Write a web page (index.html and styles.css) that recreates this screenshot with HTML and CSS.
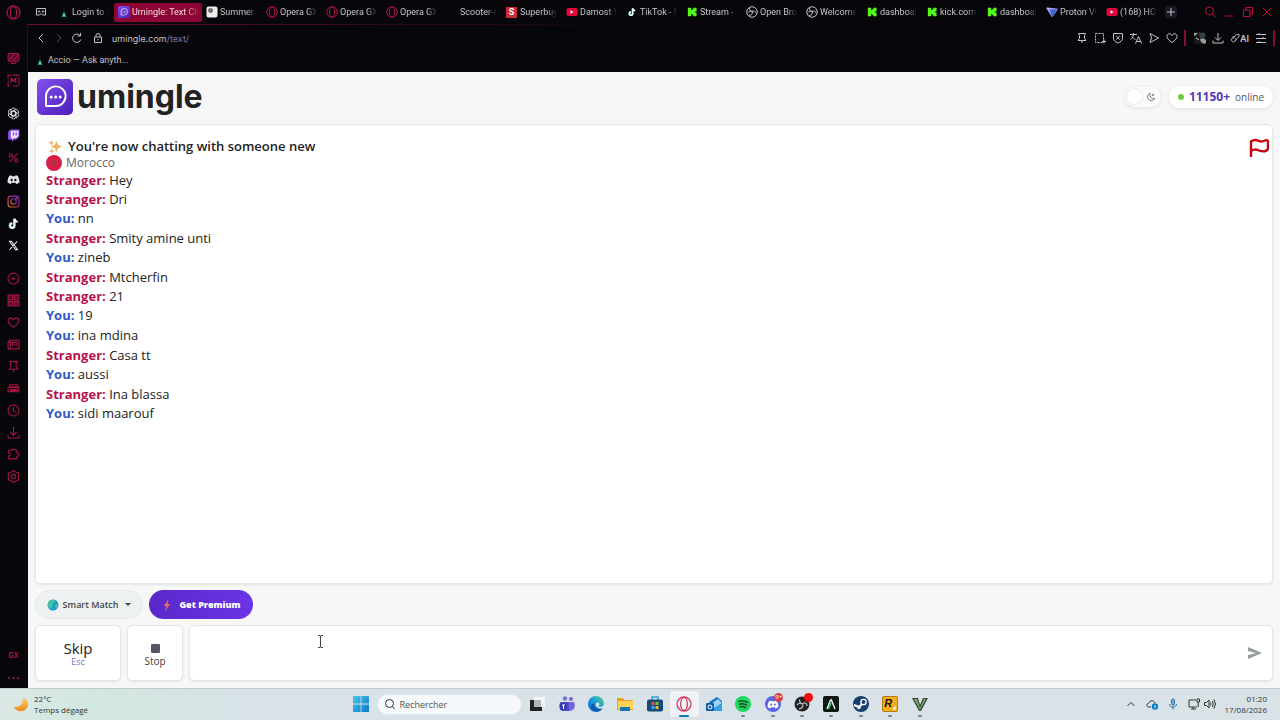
FILE: index.html
```
<!DOCTYPE html>
<html lang="en">
<head>
  <meta charset="UTF-8" />
  <meta name="viewport" content="width=device-width, initial-scale=1.0"/>
  <title>Umingle: Text Chat</title>
  <link rel="stylesheet" href="styles.css">
</head>
<body>
  <!-- shared icons -->
  <svg class="defs" aria-hidden="true">
    <defs>
      <linearGradient id="purple" x1="0" y1="0" x2="1" y2="1"><stop offset="0" stop-color="#8350ee"/><stop offset="1" stop-color="#4a1fb8"/></linearGradient>
      <linearGradient id="insta" x1="0" y1="1" x2="1" y2="0"><stop offset="0" stop-color="#d98a1e"/><stop offset=".5" stop-color="#b3246f"/><stop offset="1" stop-color="#6a35c9"/></linearGradient>
      <linearGradient id="proton" x1="0" y1="0" x2="1" y2="1"><stop offset="0" stop-color="#c9b8ff"/><stop offset="1" stop-color="#4d5fe8"/></linearGradient>
      <linearGradient id="win" x1="0" y1="0" x2="1" y2="1"><stop offset="0" stop-color="#4cc3ea"/><stop offset="1" stop-color="#0a7cc4"/></linearGradient>
      <linearGradient id="edge" x1="0" y1="1" x2="1" y2="0"><stop offset="0" stop-color="#0c62bd"/><stop offset=".55" stop-color="#1aa0dc"/><stop offset="1" stop-color="#56d66b"/></linearGradient>
      <linearGradient id="moon" x1="0" y1="0" x2="0" y2="1"><stop offset="0" stop-color="#ffd35c"/><stop offset="1" stop-color="#e98a1f"/></linearGradient>
    </defs>
    <symbol id="i-opera" viewBox="0 0 24 24"><circle cx="12" cy="12" r="10.5" fill="none" stroke="currentColor" stroke-width="2"/><ellipse cx="12" cy="12" rx="5" ry="9.5" fill="none" stroke="currentColor" stroke-width="2"/></symbol>
    <symbol id="i-umingle" viewBox="0 0 36 36"><rect width="36" height="36" rx="5" fill="url(#purple)"/><path d="M9 27V17.500a9.800 9.800 0 1 1 9.800 9.500z" fill="none" stroke="#fff" stroke-width="1.900" stroke-linejoin="round"/><g fill="#fff"><circle cx="14.200" cy="18" r="1.500"/><circle cx="18.700" cy="18" r="1.500"/><circle cx="23.200" cy="18" r="1.500"/></g></symbol>
    <symbol id="i-accio" viewBox="0 0 12 12"><path d="M6 5 8.500 11H3.500z" fill="#1d9a6b"/><circle cx="6" cy="9" r="1" fill="#7fe0b5"/></symbol>
    <symbol id="i-gpt" viewBox="0 0 24 24"><g fill="none" stroke="currentColor" stroke-width="1.500" stroke-linejoin="round"><path id="petal" d="M16.500 4.500A4.800 4.800 0 0 0 7.500 6v7.500l3.500 2M7.500 9.500 13.500 6"/><use href="#petal" transform="rotate(60 12 12)"/><use href="#petal" transform="rotate(120 12 12)"/><use href="#petal" transform="rotate(180 12 12)"/><use href="#petal" transform="rotate(240 12 12)"/><use href="#petal" transform="rotate(300 12 12)"/></g></symbol>
    <symbol id="i-youtube" viewBox="0 0 24 24"><rect x="1" y="4" width="22" height="16" rx="4" fill="#e3063c"/><path d="M9 8.500v7l6-3.500z" fill="#fff"/></symbol>
    <symbol id="i-tiktok" viewBox="0 0 24 24"><path d="M13 3v12.500a4 4 0 1 1-4-4" fill="none" stroke="#35d6d0" stroke-width="4"/><path d="M14 3v13a4 4 0 1 1-4-4M14 3c.5 3.500 2.500 5.500 6 6" fill="none" stroke="#fff" stroke-width="3.500"/></symbol>
    <symbol id="i-kick" viewBox="0 0 24 24"><path d="M2 2h8v5h3V4.500h2.500V2H23v8h-3v4h3v8h-7.500v-2.500H13V17h-3v5H2z" fill="#53fc18"/></symbol>
    <symbol id="i-obs" viewBox="0 0 24 24"><g fill="none" stroke="currentColor" stroke-width="2"><circle cx="12" cy="12" r="10.500"/><path d="M7 4c0 5 3 7 6.500 6.500M12 11c4.500-2.500 7.500 0 8 3M13 12c0 5-3 7.500-7 6.500M4 13c2-3 5-3.500 8-1"/></g></symbol>
    <symbol id="i-proton" viewBox="0 0 24 24"><path d="M2 3 22 5c2 .3 2 1.500 1 3L14 21c-1 1.500-2.500 1.500-3.200 0L1 5C.5 4 .8 3 2 3z" fill="url(#proton)"/><path d="M7 7h15l-9 14z" fill="#3f62c9"/></symbol>
    <symbol id="i-heart" viewBox="0 0 24 24"><path d="M12 21C5 16 2 12.500 2 8.500 2 3 9 1.500 12 7c3-5.500 10-4 10 1.500 0 4-3 7.500-10 12.500z" fill="none" stroke="currentColor" stroke-width="2" stroke-linejoin="round"/></symbol>
    <symbol id="i-pin" viewBox="0 0 24 24"><path d="M5 3h14l-2 4v6l3 4H4l3-4V7zM12 17v5" fill="none" stroke="currentColor" stroke-width="2" stroke-linejoin="round"/></symbol>
    <symbol id="i-download" viewBox="0 0 24 24"><path d="M12 2v14M6 11l6 6 6-6M2 17v5h20v-5" fill="none" stroke="currentColor" stroke-width="2"/></symbol>
    <symbol id="i-discord" viewBox="0 0 24 18"><path d="M8 1 4.500 2.200C2 6 .8 10 1 14.500 3 16.200 5 17 7 17.500l1.500-2.700h7L17 17.500c2-.5 4-1.300 6-3C23.200 10 22 6 19.500 2.200L16 1l-1 1.800H9z" fill="currentColor"/></symbol>
  </svg>

  <div class="desktop">
    <nav class="sidebar" aria-label="Opera sidebar">
      <button class="side opera-menu" aria-label="Opera menu"><svg><use href="#i-opera"/></svg></button>
      <div class="side-group">
        <button class="side" aria-label="Player"><svg viewBox="0 0 24 24"><rect x="2" y="3" width="20" height="14" rx="2" fill="#4a0c24" stroke="currentColor" stroke-width="2"/><path d="M4 14 14 4M10 16 21 6M7 21h10" stroke="currentColor" stroke-width="2"/></svg></button>
        <button class="side" aria-label="Mods"><svg viewBox="0 0 24 24" fill="none" stroke="currentColor" stroke-width="2"><path d="M8 2H2v20h6M11 2h11v20H11" stroke-dasharray="13 3"/><path d="M8 16V8l4 5 4-5v8" stroke-width="2.500"/></svg></button>
      </div>
      <div class="side-group">
        <button class="side light" aria-label="ChatGPT"><svg><use href="#i-gpt"/></svg></button>
        <button class="side" aria-label="Twitch"><svg viewBox="0 0 24 24"><path d="M6 1h17v13l-6 6h-4l-4 4v-4H2V5z" fill="#8b48ee"/><path d="M7 3h14v10l-4 4h-4l-3 3v-3H7z" fill="#efe5ff"/><path d="M12 6v6M17 6v6" stroke="#8b48ee" stroke-width="2.500"/></svg></button>
        <button class="side" aria-label="Deals"><svg viewBox="0 0 24 24" fill="none" stroke="currentColor" stroke-width="2"><circle cx="7" cy="8" r="3"/><circle cx="17" cy="17" r="3"/><path d="M19 5 5 20"/></svg></button>
        <button class="side light" aria-label="Discord"><svg viewBox="0 0 24 18"><use href="#i-discord"/><ellipse cx="8.500" cy="10" rx="2" ry="2.200" fill="#07070b"/><ellipse cx="15.500" cy="10" rx="2" ry="2.200" fill="#07070b"/></svg></button>
        <button class="side" aria-label="Instagram"><svg viewBox="0 0 24 24" fill="none" stroke="url(#insta)" stroke-width="2"><rect x="2" y="2" width="20" height="20" rx="5"/><circle cx="12" cy="12" r="5"/><circle cx="18" cy="6" r="1"/></svg></button>
        <button class="side" aria-label="TikTok"><svg><use href="#i-tiktok"/></svg></button>
        <button class="side light" aria-label="X"><svg class="small" viewBox="0 0 24 24" fill="none" stroke="currentColor" stroke-width="2.200"><path d="M3 3h4.500L21 21h-4.500zM20 3 3.500 21"/></svg></button>
      </div>
      <div class="side-group">
        <button class="side" aria-label="Media"><svg viewBox="0 0 24 24"><circle cx="12" cy="12" r="10" fill="none" stroke="currentColor" stroke-width="2"/><path d="M10 8.500v7l5-3.500z" fill="currentColor"/></svg></button>
        <button class="side" aria-label="Speed dial"><svg viewBox="0 0 24 24" fill="#50102a" stroke="currentColor" stroke-width="2"><path d="M2 2h9v9H2zM14 2h8v9h-8zM2 14h9v8H2zM14 14h8v8h-8z"/></svg></button>
        <button class="side" aria-label="Favourites"><svg><use href="#i-heart"/></svg></button>
        <button class="side" aria-label="News"><svg viewBox="0 0 24 24" fill="none" stroke="currentColor" stroke-width="2"><path d="M6 4h16v16H2V8h4zM6 8v12M10 8h8v5h-8zM2 8l4-4"/></svg></button>
        <button class="side" aria-label="Pinboards"><svg><use href="#i-pin"/></svg></button>
        <button class="side" aria-label="Workspaces"><svg viewBox="0 0 24 24" fill="none" stroke="currentColor" stroke-width="2"><path d="M5 5h15v4H5zM2 10h20v4H6M2 10v8h20v-4M6 16h12"/></svg></button>
        <button class="side" aria-label="History"><svg viewBox="0 0 24 24" fill="none" stroke="currentColor" stroke-width="2"><circle cx="12" cy="12" r="10"/><path d="M12 6v6l4 3"/></svg></button>
        <button class="side" aria-label="Downloads"><svg><use href="#i-download"/></svg></button>
        <button class="side" aria-label="Extensions"><svg viewBox="0 0 24 24" fill="none" stroke="currentColor" stroke-width="2" stroke-linejoin="round"><path d="M3 4h5c0 -2 7 -2 7 0h3v5c6 1 6 6 0 7v4H3v-5c4-1 4-5 0-6z"/></svg></button>
        <button class="side" aria-label="Settings"><svg viewBox="0 0 24 24" fill="none" stroke="currentColor" stroke-width="2" stroke-linejoin="round"><path d="m12 1 4 2.500 5.500 2V18L16 20.500 12 23l-4-2.500L2.500 18V5.500L8 3.500z"/><circle cx="12" cy="12" r="4"/></svg></button>
      </div>
      <div class="side-group side-bottom">
        <button class="side gx">GX</button>
        <button class="side" aria-label="More"><svg viewBox="0 0 24 24" fill="currentColor"><circle cx="4" cy="13" r="2"/><circle cx="12" cy="13" r="2"/><circle cx="20" cy="13" r="2"/></svg></button>
      </div>
    </nav>

    <div class="window">
      <header class="tabs">
        <button class="gamepad" aria-label="Tab islands"><svg viewBox="0 0 24 24" fill="none" stroke="currentColor" stroke-width="2"><path d="M3 5h18v13h-6l-3-3-3 3H3z"/><circle cx="8" cy="11" r="1.500"/><circle cx="16" cy="11" r="1.500"/></svg></button>
        <a class="tab" href="#"><svg><use href="#i-accio"/></svg><span>Login to A</span></a>
        <a class="tab active" href="#"><svg><use href="#i-umingle"/></svg><span>Umingle: Text Ch</span></a>
        <a class="tab" href="#"><svg viewBox="0 0 24 24"><rect x="1" y="1" width="22" height="22" rx="4" fill="#eee"/><svg x="3" y="3" width="18" height="18" color="#222"><use href="#i-gpt"/></svg></svg><span>Summer</span></a>
        <a class="tab" href="#"><svg class="red"><use href="#i-opera"/></svg><span>Opera GX</span></a>
        <a class="tab" href="#"><svg class="red"><use href="#i-opera"/></svg><span>Opera GX</span></a>
        <a class="tab" href="#"><svg class="red"><use href="#i-opera"/></svg><span>Opera GX</span></a>
        <a class="tab" href="#"><svg></svg><span>Scooter-A</span></a>
        <a class="tab" href="#"><b class="superbuy">S</b><span>Superbuy</span></a>
        <a class="tab" href="#"><svg><use href="#i-youtube"/></svg><span>Damost V</span></a>
        <a class="tab" href="#"><svg class="small"><use href="#i-tiktok"/></svg><span>TikTok - M</span></a>
        <a class="tab" href="#"><svg class="small"><use href="#i-kick"/></svg><span>Stream -</span></a>
        <a class="tab" href="#"><svg><use href="#i-obs"/></svg><span>Open Bro</span></a>
        <a class="tab" href="#"><svg><use href="#i-obs"/></svg><span>Welcome</span></a>
        <a class="tab" href="#"><svg class="small"><use href="#i-kick"/></svg><span>dashboar</span></a>
        <a class="tab" href="#"><svg class="small"><use href="#i-kick"/></svg><span>kick.com</span></a>
        <a class="tab" href="#"><svg class="small"><use href="#i-kick"/></svg><span>dashboar</span></a>
        <a class="tab" href="#"><svg><use href="#i-proton"/></svg><span>Proton VP</span></a>
        <a class="tab" href="#"><svg><use href="#i-youtube"/></svg><span>(168) HOV</span></a>
        <button class="new-tab" aria-label="New tab"><svg viewBox="0 0 12 12" stroke="currentColor"><path d="M6 2v8M2 6h8"/></svg></button>
        <div class="window-buttons">
          <button aria-label="Search tabs"><svg viewBox="0 0 12 12"><circle cx="5.500" cy="5" r="4"/><path d="m8.500 8 3 3"/></svg></button>
          <button aria-label="Minimize"><svg viewBox="0 0 12 12"><path d="M2 10h8"/></svg></button>
          <button aria-label="Restore"><svg viewBox="0 0 12 12"><path d="M1.500 4h6.500v6.500H1.500zM4 4V1.500h6.500V8H8"/></svg></button>
          <button aria-label="Close"><svg viewBox="0 0 12 12"><path d="m2 2 8 8M10 2l-8 8"/></svg></button>
        </div>
      </header>

      <div class="chrome">
        <div class="toolbar">
          <button aria-label="Back"><svg viewBox="0 0 12 12"><path d="M8 2 4 6l4 4"/></svg></button>
          <button class="dim" aria-label="Forward"><svg viewBox="0 0 12 12"><path d="m4 2 4 4-4 4"/></svg></button>
          <button aria-label="Reload"><svg viewBox="0 0 12 12"><path d="M9 3.500a4.200 4.200 0 1 0 .8 4M9.500 1v3H6.500"/></svg></button>
          <button class="lock" aria-label="Site information"><svg viewBox="0 0 12 12"><path d="M2.500 5h7v5.500h-7zM4 5V3.500a2 2 0 0 1 4 0V5M6 7v1.500"/></svg></button>
          <div class="url">umingle.com<span>/text/</span></div>
          <button aria-label="Pin"><svg><use href="#i-pin"/></svg></button>
          <button aria-label="Snapshot"><svg viewBox="0 0 12 12"><path d="M1.500 1.500h8v9h-8z" stroke-dasharray="2 1"/><path d="M8 9.500h4M10 7.500v4"/></svg></button>
          <button aria-label="Ad blocker"><svg viewBox="0 0 12 12"><path d="M1.500 1.500h9V6c0 2.500-2 4-4.500 5-2.500-1-4.500-2.500-4.500-5zM4.200 4l3.600 3.600M7.800 4 4.200 7.600"/></svg></button>
          <button aria-label="Translate"><svg viewBox="0 0 12 12"><path d="M0 2.500h7M3.500 1v1.500C3 5 2 6.500.5 7.500M2 4.500c1 1.500 2 2.300 3.500 3M5.500 11.500l3-7 3 7M6.500 9.500h4"/></svg></button>
          <button aria-label="My Flow"><svg viewBox="0 0 12 12"><path d="m2 1.500 8.500 4.500L2 10.500 3.500 6z"/></svg></button>
          <button aria-label="Bookmark"><svg><use href="#i-heart"/></svg></button>
          <i class="bar"></i>
          <button class="profile" aria-label="Profile"><svg viewBox="0 0 12 12"><rect width="12" height="12" rx="2" fill="#15191c" stroke="none"/><path d="M0 1h4L2 3 0 4zM6 7l3-1 3 2v3l-2 1-3-2z" fill="#a3978f" stroke="none"/><path d="M5 1h6v4L6 6z" fill="#36444a" stroke="none"/><path d="m2 6 3 2" stroke="#d6d0ca"/></svg></button>
          <button aria-label="Downloads"><svg><use href="#i-download"/></svg></button>
          <button class="ai"><svg viewBox="0 0 12 12"><path d="M1 8.500 7.500 2 11 1.500 10.500 5 4 11zM2 6l3-2M8 7l-2 3M4.500 5 7 7.500"/></svg>AI</button>
          <button aria-label="Easy setup"><svg viewBox="0 0 12 12"><path d="M1 2.500h10M1 6.500h10M1 10.500h10M4 1v2M8 5v2M4 9v2"/></svg></button>
          <i class="bar"></i>
        </div>
        <div class="bookmarks"><a href="#"><svg><use href="#i-accio"/></svg>Accio — Ask anyth...</a></div>
      </div>

      <main class="page">
        <div class="page-header">
          <a class="logo" href="#"><svg><use href="#i-umingle"/></svg>umingle</a>
          <label class="theme"><input type="checkbox" aria-label="Dark mode"><svg viewBox="0 0 12 12"><path d="M5 1.500a4.500 4.500 0 1 0 5.500 6C7 9 4 6 5 1.500zM8.500 2v3M7 3.500h3" fill="none" stroke="#666"/></svg></label>
          <div class="online"><i></i><b>11150+</b><span>online</span></div>
        </div>

        <section class="chat">
          <button class="flag" aria-label="Report"><svg viewBox="0 0 20 20"><path d="M2 19V3.500C5 1 7 1.500 10 3c2 1 4 .5 6-.5 2-.8 3 0 3 1.500v6c0 2-1 2.500-2.500 3-2.500.8-4.500.3-6.500-.5-3-1.500-5-1.500-8 .5" fill="none" stroke="#c5050c" stroke-width="2.400" stroke-linejoin="round"/></svg></button>
          <h1><svg viewBox="0 0 16 16"><path d="m9 2 1.500 4L15 8l-4.500 2L9 14 7.500 10 3 8l4.500-2z" fill="#eeb55f"/><path d="m3.500 1 .8 2.200 2.200.8-2.200.8L3.500 7l-.8-2.200L.5 4l2.200-.8zM4 10l.8 2 2.200.8-2.200.8L4 16l-.8-2.400L1 12.800l2.200-.8z" fill="#f0ad58"/></svg>You're now chatting with someone new</h1>
          <div class="country"><svg viewBox="0 0 16 16"><circle cx="8" cy="8" r="8" fill="#d81e45"/><path d="m8 5.500 1.500 4.500-3.800-2.800h4.600L6.500 10z" fill="none" stroke="#8b403d"/></svg>Morocco</div>
          <ul class="messages">
            <li class="stranger"><b>Stranger:</b> Hey</li>
            <li class="stranger"><b>Stranger:</b> Dri</li>
            <li class="you"><b>You:</b> nn</li>
            <li class="stranger"><b>Stranger:</b> Smity amine unti</li>
            <li class="you"><b>You:</b> zineb</li>
            <li class="stranger"><b>Stranger:</b> Mtcherfin</li>
            <li class="stranger"><b>Stranger:</b> 21</li>
            <li class="you"><b>You:</b> 19</li>
            <li class="you"><b>You:</b> ina mdina</li>
            <li class="stranger"><b>Stranger:</b> Casa tt</li>
            <li class="you"><b>You:</b> aussi</li>
            <li class="stranger"><b>Stranger:</b> Ina blassa</li>
            <li class="you"><b>You:</b> sidi maarouf</li>
          </ul>
        </section>

        <div class="options">
          <button class="match"><svg viewBox="0 0 12 12"><circle cx="6" cy="6" r="5.500" fill="#2296d8"/><path d="M2 2.500C4 0 7 .5 8 1.500L7 4 5 5l1 2-2 3C1 9 0 6 2 2.500zM9 5l2 1-1 3-2-1z" fill="#43c59a"/></svg>Smart Match<i class="caret"></i></button>
          <button class="premium"><svg viewBox="0 0 12 12"><path d="M7.500 0 3 7h2.500L4 12l5-7H6.500z" fill="#f27455"/></svg>Get Premium</button>
        </div>

        <form class="composer">
          <button type="button" class="skip">Skip<small>Esc</small></button>
          <button type="button" class="stop"><i></i>Stop</button>
          <div class="message-box">
            <textarea aria-label="Message"></textarea>
            <button type="button" class="send" aria-label="Send"><svg viewBox="0 0 14 12"><path d="m0 0 14 6-14 6V8l8-2-8-2z" fill="#959e9e"/></svg></button>
            <svg class="cursor" viewBox="0 0 7 13"><path d="M1 .5h2l.5.5.5-.5h2M1 12.500h2l.5-.5.5.5h2M3.500 1v11" fill="none" stroke="#444"/></svg>
          </div>
        </form>
      </main>
    </div>
  </div>

  <footer class="taskbar">
    <div class="weather">
      <svg viewBox="0 0 16 16"><path d="M10 1c6 3 7 10 1 13.500C7 16.500 2 14.500 1 10.500c5 1.500 10-3 9-9.500z" fill="url(#moon)"/></svg>
      <div><b>22°C</b>Temps dégagé</div>
    </div>
    <div class="task-center">
      <button class="task start" aria-label="Start"><svg viewBox="0 0 16 16"><path d="M0 0h7.600v7.600H0zM8.400 0H16v7.600H8.400zM0 8.400h7.600V16H0zM8.400 8.400H16V16H8.400z" fill="url(#win)"/></svg></button>
      <label class="search"><svg viewBox="0 0 12 12"><circle cx="6.500" cy="5.500" r="4"/><path d="m9.500 8.500 2 2.500"/></svg><input type="search" placeholder="Rechercher" aria-label="Rechercher"></label>
      <div class="apps">
        <button class="task" aria-label="Task view"><svg viewBox="0 0 16 16"><path d="M5 1h11v10H5z" fill="#f5f6f6"/><path d="M1 4h4v7h8v4H1z" fill="#222"/><path d="M5 4h7v7H5z" fill="#b4b4b4"/></svg></button>
        <button class="task" aria-label="Teams"><svg viewBox="0 0 16 16"><circle cx="6" cy="2.500" r="2.200" fill="#7478e0"/><circle cx="12" cy="3" r="2" fill="#8b5fd4"/><path d="M2 6h8v9H4c-5 0-4-9-2-9z" fill="#4b50c8"/><path d="M10 6h5c2 5 0 9-5 9z" fill="#7a60df"/><rect x="1" y="7" width="7" height="7" rx="1" fill="#373bab"/><path d="M3 9h3M4.500 9v4" stroke="#fff"/></svg></button>
        <button class="task" aria-label="Edge"><svg viewBox="0 0 16 16"><circle cx="8" cy="8" r="8" fill="url(#edge)"/><path d="M6 8c0 4 4 6 8.500 4.500C12 16 6 16.500 3.500 13 2 10 4 7 6 8z" fill="#1358a8"/><path d="M8 7c3-2 5 2 2 3 2 1.500 5 1 6-1v3l-2 .5c-4 0-7-2-6-5.500z" fill="#dfe8ed"/></svg></button>
        <button class="task" aria-label="Explorer"><svg viewBox="0 0 16 16"><path d="M0 2h6l1.500 2H16v10H0z" fill="#e9a420"/><path d="M1 5h15v8H1z" fill="#ffd257"/><path d="M3 11h10v4H3z" fill="#1474b8"/></svg></button>
        <button class="task" aria-label="Store"><svg viewBox="0 0 16 16"><path d="M5 4V1h6v3" fill="none" stroke="#319ed4" stroke-width="1.500"/><rect x="0" y="3.500" width="16" height="12" rx="2" fill="#164a79"/><path d="M4.500 6h3v3h-3z" fill="#f05030"/><path d="M8.500 6h3v3h-3z" fill="#80ba28"/><path d="M4.500 10h3v3h-3z" fill="#35a5ed"/><path d="M8.500 10h3v3h-3z" fill="#f5bb24"/></svg></button>
        <button class="task current" aria-label="Opera GX"><svg class="pink"><use href="#i-opera"/></svg></button>
        <button class="task" aria-label="Outlook"><svg viewBox="0 0 16 16"><path d="M3 6 11 1l5 4v9H4z" fill="#1672c6"/><path d="m5 8 7-5 4 4-7 5z" fill="#9bd4f5"/><path d="m4 15 12-8v8z" fill="#31a4e8"/><rect y="7" width="8" height="8" rx="1" fill="#115ea5"/><circle cx="4" cy="11" r="2" fill="none" stroke="#fff"/></svg></button>
        <button class="task running" aria-label="Spotify"><svg viewBox="0 0 16 16"><circle cx="8" cy="8" r="8" fill="#1ed760"/><path d="M3.500 5.500c3-1 6.500-.7 9.500 1M4 8.300c2.500-.8 5.500-.5 8 1M4.500 11c2-.6 4.500-.3 6.500.8" fill="none" stroke="#153d24" stroke-width="1.400"/></svg></button>
        <button class="task running" aria-label="Discord"><svg viewBox="0 0 16 16"><circle cx="8" cy="8" r="8" fill="#5865e8"/><path d="m6 4.500-2 .7C3 7 2.500 9 2.700 11.200c1 .7 2 1 2.800 1.200l.8-1.200h3.400l.8 1.200c.8-.2 1.800-.5 2.800-1.200.2-2.200-.3-4.200-1.300-6l-2-.7-.5.800H6.500z" fill="#fff"/><circle cx="6.200" cy="8.500" r="1" fill="#5865e8"/><circle cx="9.800" cy="8.500" r="1" fill="#5865e8"/></svg><span class="badge">9+</span></button>
        <button class="task running" aria-label="OBS"><svg viewBox="0 0 16 16"><circle cx="8" cy="8" r="7.500" fill="#222"/><path d="M5.500 3.500c0 3 1.500 4.500 3.500 4M8.500 7.500c3-1.500 4.500 0 4.500 2.500M9 8.500c0 3-2 4.500-4 4M3 9c1.500-2 3-2 5-1" fill="none" stroke="#bbb" stroke-width="1.300"/></svg><span class="badge dot"></span></button>
        <button class="task running" aria-label="Altstore"><svg viewBox="0 0 16 16"><rect width="16" height="16" rx="2" fill="#101814"/><path d="m4 13 3.500-9M8 3l4 10" stroke="#e7eee9" stroke-width="1.500"/><path d="M8 7 5.500 13" stroke="#3ed36b" stroke-width="1.500"/></svg></button>
        <button class="task running" aria-label="Steam"><svg viewBox="0 0 16 16"><circle cx="8" cy="8" r="8" fill="#173f6e"/><circle cx="10.500" cy="6" r="2.700" fill="none" stroke="#fff" stroke-width="1.300"/><path d="m1 9 5 2 3-3" fill="none" stroke="#fff" stroke-width="2.200"/><circle cx="6" cy="11.500" r="1.800" fill="#fff"/></svg></button>
        <button class="task running rockstar" aria-label="Rockstar"><b>R<sub>★</sub></b></button>
        <button class="task running" aria-label="GTA V"><svg viewBox="0 0 16 16"><path d="M0 2h6l2 7 3-7h5l-7 13H7z" fill="#39463a"/><path d="M2 3h3l3 9 4-9h2L8 14z" fill="#78ad68"/></svg></button>
      </div>
    </div>
    <div class="tray">
      <button aria-label="Hidden icons"><svg viewBox="0 0 12 12"><path d="m2.500 8 3.500-3.500L9.500 8"/></svg></button>
      <button aria-label="OneDrive"><svg viewBox="0 0 12 12"><path d="M5 9H2.500C0 8.500.5 5.500 2.500 5.500 4 2 8 2 9 5"/><circle cx="9" cy="8.500" r="3.200" fill="#087bc8" stroke="none"/><path d="M9 7v3" stroke="#fff"/></svg></button>
      <button aria-label="Microphone"><svg viewBox="0 0 12 12"><rect x="4.500" y="1" width="3" height="6" rx="1.500" fill="#6baedc" stroke="#2e6d9e"/><path d="M2.500 6c0 4 7 4 7 0M6 9v2.500" stroke="#2e6d9e"/></svg></button>
      <button aria-label="Network"><svg viewBox="0 0 12 12"><path d="M8 2H1v7h8M5 9v2M3 11h5M9 1h2.500v3H9zM10.200 4v5"/></svg></button>
      <button aria-label="Volume"><svg viewBox="0 0 12 12"><path d="M.5 4.500h2L5 2v8L2.500 7.500h-2zM6.500 4.500q1 1.500 0 3M8.300 3q2 3 0 6M10 1.500q3 4.500 0 9"/></svg></button>
      <div class="clock">01:20<br>17/08/2026</div>
    </div>
  </footer>
</body>
</html>
```
FILE: styles.css
```
* {
  box-sizing: border-box;
}
body {
  margin: 0;
  height: 100vh;
  display: flex;
  flex-direction: column;
  overflow: hidden;
  background: #07070b;
  color: #222;
  font-family: "Open Sans", sans-serif;
}
button {
  padding: 0;
  border: none;
  background: none;
  color: inherit;
  font-family: inherit;
  cursor: pointer;
}
a {
  color: inherit;
  text-decoration: none;
}
svg {
  width: 12px;
  height: 12px;
  flex: none;
}
.defs {
  position: absolute;
  width: 0;
  height: 0;
}
.desktop {
  flex: 1;
  min-height: 0;
  display: flex;
}

/* sidebar */
.sidebar {
  width: 28px;
  display: flex;
  flex-direction: column;
  color: #a81443;
}
.side {
  display: flex;
  align-items: center;
  justify-content: center;
  width: 27px;
  height: 22px;
}
.side svg {
  width: 13px;
  height: 13px;
}
.side .small {
  width: 11px;
  height: 11px;
}
.light {
  color: #e4e4ec;
}
.opera-menu {
  height: 24px;
  margin-bottom: 23px;
}
.opera-menu svg {
  width: 15px;
  height: 15px;
}
.side-group {
  margin-bottom: 11px;
}
.side-bottom {
  margin-top: auto;
  margin-bottom: 0;
}
.gx {
  font: bold 7px Inter, sans-serif;
}

/* tabs */
.window {
  flex: 1;
  min-width: 0;
  display: flex;
  flex-direction: column;
}
.tabs {
  display: flex;
  align-items: center;
  height: 24px;
  color: #c3c3cc;
  font: 9px Roboto, sans-serif;
}
.gamepad {
  display: flex;
  justify-content: center;
  width: 26px;
}
.tab {
  display: flex;
  align-items: center;
  gap: 2px;
  width: 60px;
  height: 19px;
  padding: 0 3px 0 4px;
}
.tab span {
  flex: 1;
  overflow: hidden;
  white-space: nowrap;
  -webkit-mask-image: linear-gradient(90deg, #000 70%, transparent 95%);
  mask-image: linear-gradient(90deg, #000 70%, transparent 95%);
}
.tab.active {
  width: 88px;
  background: #8c0534;
  border-radius: 2px;
  color: #f3d9e2;
}
.tab.active span {
  -webkit-mask-image: linear-gradient(90deg, #000 80%, transparent);
  mask-image: linear-gradient(90deg, #000 80%, transparent);
}
.tab .small {
  width: 10px;
  height: 10px;
  margin: 0 1px;
}
.red {
  color: #a81443;
}
.superbuy {
  width: 11px;
  height: 11px;
  margin-right: 1px;
  background: #c92b39;
  color: #fff;
  line-height: 11px;
  text-align: center;
}
.new-tab {
  display: flex;
  margin-left: 3px;
  background: #1b1a24;
  border-radius: 2px;
}
.window-buttons {
  display: flex;
  gap: 7px;
  margin-left: auto;
  margin-right: 7px;
  color: #b5123f;
}
.window-buttons button {
  display: flex;
}
.window-buttons svg,
.toolbar svg,
.tray svg,
.search svg {
  fill: none;
  stroke: currentColor;
}

/* address bar */
.chrome {
  height: 48px;
  border-left: 1px solid #3c0a1d;
  margin-left: -1px;
  background: linear-gradient(90deg, #6d0c2f, #07070b 50%) top / 100% 1px no-repeat;
  color: #c3c3cc;
}
.toolbar {
  display: flex;
  align-items: center;
  gap: 6px;
  height: 28px;
  padding: 0 5px 0 7px;
  font: 9px Inter, sans-serif;
}
.toolbar button {
  display: flex;
}
.toolbar .dim {
  color: #4b4b55;
}
.toolbar .lock {
  margin-left: 3px;
}
.toolbar .profile {
  margin-left: 2px;
}
.toolbar .ai {
  align-items: center;
  font-size: 9px;
  font-weight: 600;
}
.toolbar .ai svg {
  width: 10px;
  height: 10px;
}
.url {
  flex: 1;
  margin-left: 2px;
}
.url span {
  color: #7d7ba8;
}
.bar {
  width: 2px;
  height: 16px;
  background: #8a0b38;
}
.bookmarks {
  padding: 2px 6px;
}
.bookmarks a {
  display: flex;
  align-items: center;
  gap: 2px;
  font: 9px Roboto, sans-serif;
}

/* chat page */
.page {
  flex: 1;
  min-height: 0;
  display: flex;
  flex-direction: column;
  gap: 6px;
  padding: 0 7px 7px;
  background: #f7f7f7;
}
.page-header {
  display: flex;
  align-items: center;
  height: 46px;
  padding-top: 3px;
}
.logo {
  display: flex;
  align-items: center;
  gap: 4px;
  margin-right: auto;
  padding-left: 2px;
  color: #222;
  font: bold 32px/36px Inter, sans-serif;
}
.logo svg {
  width: 36px;
  height: 36px;
}
.theme {
  display: flex;
  align-items: center;
  gap: 4px;
  height: 20px;
  margin-right: 8px;
  padding: 0 5px 0 2px;
  background: #fbfbfb;
  border-radius: 10px;
  box-shadow: 0 1px 4px rgba(0, 0, 0, 0.1);
}
.theme input {
  appearance: none;
  width: 15px;
  height: 15px;
  margin: 0;
  background: #fff;
  border-radius: 50%;
  box-shadow: 0 0 2px rgba(0, 0, 0, 0.2);
}
.theme svg {
  width: 10px;
  height: 10px;
}
.online {
  display: flex;
  align-items: center;
  gap: 5px;
  height: 22px;
  padding: 0 9px;
  background: #fff;
  border-radius: 11px;
  box-shadow: 0 1px 4px rgba(0, 0, 0, 0.1);
  color: #555;
  font-size: 10px;
}
.online i {
  width: 6px;
  height: 6px;
  background: #6ccb3c;
  border-radius: 50%;
}
.online b {
  color: #5737b5;
  font-size: 12px;
}
.chat,
.skip,
.stop,
.message-box {
  background: #fff;
  border: 1px solid #e6e6e6;
  border-radius: 5px;
  box-shadow: 0 1px 2px rgba(0, 0, 0, 0.08);
}
.chat {
  position: relative;
  flex: 1;
  min-height: 0;
  padding: 12px 10px;
  font-size: 13px;
}
.flag {
  position: absolute;
  top: 13px;
  right: 3px;
}
.flag svg {
  display: block;
  width: 20px;
  height: 20px;
}
.chat h1 {
  display: flex;
  align-items: center;
  gap: 5px;
  margin: 0;
  padding-left: 2px;
  font-size: 13px;
  line-height: 18px;
  font-weight: 600;
}
.chat h1 svg {
  width: 15px;
  height: 15px;
}
.country {
  display: flex;
  align-items: center;
  gap: 4px;
  color: #666;
  font-size: 12px;
  line-height: 16px;
}
.country svg {
  width: 16px;
  height: 16px;
}
.messages {
  margin: 0;
  padding: 0;
  list-style: none;
  line-height: 19px;
}
.you {
  padding-bottom: 1px;
}
.stranger b {
  color: #b7134a;
}
.you b {
  color: #2f58c6;
}

/* controls */
.options {
  display: flex;
  gap: 6px;
  height: 29px;
}
.options button {
  display: flex;
  align-items: center;
  justify-content: center;
  border-radius: 15px;
  font-size: 9px;
}
.match {
  gap: 4px;
  width: 108px;
  background: #eef1f2;
  border: 1px solid #e6e9ea;
  color: #444;
  font-weight: 600;
}
.caret {
  margin-left: 3px;
  border: 3px solid transparent;
  border-top-color: #444;
  border-bottom: 0;
}
.premium {
  gap: 6px;
  width: 104px;
  background: linear-gradient(90deg, #5a28c9, #6a34e8);
  color: #fff;
  font-weight: 800;
}
.composer {
  display: flex;
  gap: 6px;
  height: 56px;
}
.skip,
.stop {
  display: flex;
  flex-direction: column;
  align-items: center;
  justify-content: center;
}
.skip {
  width: 86px;
  font-size: 15px;
  line-height: 18px;
}
.skip small {
  color: #7d70cf;
  font-size: 9px;
  line-height: 10px;
}
.stop {
  gap: 2px;
  width: 56px;
  padding-top: 4px;
  color: #444;
  font-size: 10px;
  line-height: 12px;
}
.stop i {
  width: 9px;
  height: 9px;
  background: #545863;
  border-radius: 1px;
}
.message-box {
  position: relative;
  flex: 1;
  display: flex;
  align-items: center;
  padding-right: 10px;
}
.message-box textarea {
  flex: 1;
  height: 100%;
  padding: 8px;
  border: none;
  outline: none;
  background: none;
  resize: none;
  font: 13px "Open Sans", sans-serif;
}
.send svg {
  display: block;
  width: 14px;
  height: 12px;
}
.cursor {
  position: absolute;
  left: 127px;
  top: 9px;
  width: 7px;
  height: 13px;
}

/* taskbar */
.taskbar {
  display: grid;
  grid-template-columns: 1fr auto 1fr;
  align-items: center;
  height: 32px;
  padding-bottom: 1px;
  border-top: 1px solid #c2c8cb;
  background: linear-gradient(90deg, #dbe8e6, #d2e8df 7%, #d8e2e8 20%, #d9e2e7);
  color: #333;
}
.weather {
  display: flex;
  align-items: center;
  gap: 5px;
  padding-left: 13px;
  font-size: 8px;
  line-height: 11px;
}
.weather svg {
  width: 16px;
  height: 16px;
}
.weather b {
  display: block;
  font-weight: 500;
}
.task-center,
.apps {
  display: flex;
  align-items: center;
}
.apps {
  width: 412px;
}
.task {
  position: relative;
  display: flex;
  flex: 1;
  align-items: center;
  justify-content: center;
  height: 26px;
}
.task svg {
  width: 16px;
  height: 16px;
}
.start {
  flex: none;
  width: 30px;
}
.search {
  display: flex;
  align-items: center;
  gap: 5px;
  width: 145px;
  height: 21px;
  margin-left: 1px;
  margin-right: 1px;
  padding: 0 5px;
  background: #f6f9fb;
  border: 1px solid #e3e8eb;
  border-radius: 11px;
}
.search input {
  width: 100%;
  padding: 0;
  border: none;
  outline: none;
  background: none;
  font: 9px "Open Sans", sans-serif;
}
.search input::placeholder {
  color: #555;
}
.current {
  background: #f0f3f5;
  border-radius: 3px;
}
.pink {
  color: #d63a63;
}
.current::after,
.running::after {
  content: "";
  position: absolute;
  bottom: 0;
  width: 4px;
  height: 2px;
  background: #7b8185;
  border-radius: 1px;
}
.current::after {
  width: 10px;
  background: #0c78c2;
}
.badge {
  position: absolute;
  top: 2px;
  right: 4px;
  width: 9px;
  height: 9px;
  background: #d8424c;
  border-radius: 50%;
  color: #fff;
  font-size: 6px;
  line-height: 9px;
}
.badge.dot {
  background: #f00711;
}
.rockstar b {
  width: 16px;
  height: 16px;
  background: #f7ae18;
  border: 1px solid #b17a16;
  border-radius: 2px;
  color: #111;
  font: italic bold 11px/13px "Liberation Sans", sans-serif;
  white-space: nowrap;
}
.rockstar sub {
  color: #fff;
  font-size: 5px;
  line-height: 0;
}
.tray {
  display: flex;
  align-items: center;
  justify-content: flex-end;
  padding-right: 13px;
}
.tray button {
  display: flex;
  margin-right: 9px;
}
.tray button:nth-child(4) {
  margin-right: 4px;
}
.clock {
  font-size: 8px;
  line-height: 11px;
  text-align: right;
}
```
